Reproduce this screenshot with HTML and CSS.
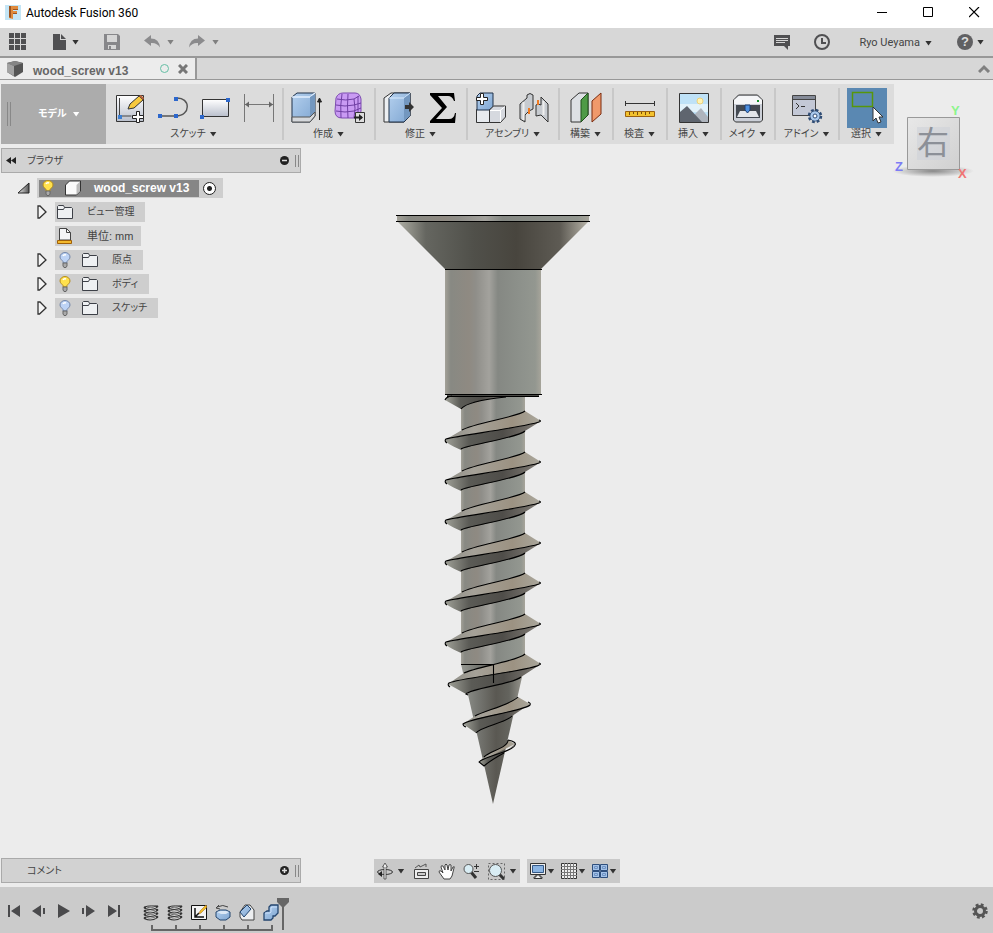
FILE: index.html
```html
<!DOCTYPE html>
<html lang="ja">
<head>
  <meta charset="UTF-8" />
  <meta name="viewport" content="width=device-width, initial-scale=1.0" />
  <title>Autodesk Fusion 360</title>
  <link rel="stylesheet" href="styles.css">
</head>

<body>
  <!-- shared gradients and symbols -->
  <svg class="sprite" width="0" height="0" aria-hidden="true">
    <defs>
      <linearGradient id="blue" x1="0" y1="0" x2="1" y2="1"><stop offset="0" stop-color="#b4d0ee" /><stop offset="1" stop-color="#7fa6d2" /></linearGradient>
      <linearGradient id="paper" x1="0" y1="0" x2="0" y2="1"><stop offset="0" stop-color="#fff" /><stop offset="1" stop-color="#b9bfcc" /></linearGradient>
      <linearGradient id="shank"><stop offset="0" stop-color="#a3a198" /><stop offset=".06" stop-color="#888983" /><stop offset=".25" stop-color="#8f8a82" /><stop offset=".32" stop-color="#8f8e89" /><stop offset=".46" stop-color="#a3a29d" /><stop offset=".55" stop-color="#858883" /><stop offset=".78" stop-color="#8d918b" /><stop offset=".94" stop-color="#939790" /><stop offset="1" stop-color="#a6a49a" /></linearGradient>
      <linearGradient id="head"><stop offset="0" stop-color="#b0b0a6" /><stop offset=".15" stop-color="#656660" /><stop offset=".4" stop-color="#50504a" /><stop offset=".62" stop-color="#48453e" /><stop offset=".85" stop-color="#5e5b54" /><stop offset="1" stop-color="#b8b4a9" /></linearGradient>
      <linearGradient id="cone"><stop offset="0" stop-color="#969892" /><stop offset=".25" stop-color="#777873" /><stop offset=".55" stop-color="#5a5852" /><stop offset=".75" stop-color="#64645e" /><stop offset="1" stop-color="#a09e96" /></linearGradient>
      <linearGradient id="lit"><stop offset="0" stop-color="#8e8e87" /><stop offset=".3" stop-color="#a5a198" /><stop offset=".7" stop-color="#9c9282" /><stop offset="1" stop-color="#aaa79c" /></linearGradient>
      <linearGradient id="dim"><stop offset="0" stop-color="#a0a198" /><stop offset=".25" stop-color="#5b5b56" /><stop offset=".6" stop-color="#4f4d49" /><stop offset="1" stop-color="#858079" /></linearGradient>
      <linearGradient id="corner"><stop offset="0" stop-color="#eee" /><stop offset="1" stop-color="#555" /></linearGradient>
    </defs>
    <symbol id="bulb" viewBox="0 0 12 16">
      <path d="M4 9.500C3 8 1 7 1 5a5 4.500 0 0 1 10 0C11 7 9 8 8 9.500V11H4z" stroke-width="1" />
      <path d="M4 4q1-2 3-1" fill="none" stroke="#fff" stroke-width="1.500" />
      <path d="M4 11h4v3l-1 1.500H5L4 14z" fill="#aaa" stroke="#666" />
    </symbol>
    <symbol id="folder" viewBox="0 0 16 16">
      <path d="M.5 14.500v-12l1-1h5l1 2h7l1 1v10z" fill="#eef0f2" stroke="#3d4047" />
      <path d="M1 5.500h5.500l1-2" fill="none" stroke="#3d4047" />
    </symbol>
    <symbol id="expand" viewBox="0 0 10 14">
      <path d="M1 1v12l1.500 0L9 7 3 1z" fill="#f4f4f4" stroke="#333" stroke-width="1.300" />
    </symbol>
    <symbol id="spring" viewBox="0 0 16 16">
      <path d="M2 3q6 3 12-1M2 6.500q6 3 12-1M2 10q6 3 12-1M2 13.500q6 3 12-1" fill="none" stroke="#333" stroke-width="2.600" stroke-linecap="round" />
      <path d="M3 3q5 2 10-.5M3 6.500q5 2 10-.5M3 10q5 2 10-.5M3 13.500q5 2 10-.5" fill="none" stroke="#d0d0d0" stroke-width="1.200" />
      <path d="M2 3q0-2 11-1.500" fill="none" stroke="#333" />
    </symbol>
    <symbol id="turn" viewBox="440 405 106 50">
      <path d="M525 411L541 421C533 426 455 436 445 440L462 430C474 423 518 417 525 411z" fill="url(#lit)" />
      <path d="M541 421C533 426 455 436 445 440Q445 443 461 450C466 445 518 438 525 431z" fill="url(#dim)" />
      <path d="M525 411C518 417 474 423 462 430M539 420q3 1 0 2C525 427 455 436 446 439q-2 2 1 4M461 449C466 445 518 438 525 431" fill="none" stroke="#000" stroke-width="1.100" />
    </symbol>
  </svg>

  <header class="titlebar">
    <svg class="app-icon" width="16" height="16" viewBox="0 0 16 16"><path d="M0 0h16v15H0z" fill="#c4e5f5" /><path d="M4 1h9v3H8v2h4v3H8v5l-4-1z" fill="#e08a3c" /><path d="M4 1h2v12l-2-1zM8 4h5v1H8zM8 8h4v1H8z" fill="#9c5320" /></svg>
    <h1>Autodesk Fusion 360</h1>
    <div class="window-buttons">
      <button aria-label="最小化"><svg width="11" height="11"><path d="M0 5.500h10" stroke="#000" /></svg></button>
      <button aria-label="最大化"><svg width="11" height="11"><path d="M.5.5h9v9h-9z" fill="none" stroke="#000" /></svg></button>
      <button aria-label="閉じる"><svg width="11" height="11"><path d="M0 0l10 10M10 0L0 10" stroke="#000" stroke-width="1.200" /></svg></button>
    </div>
  </header>

  <nav class="quickbar">
    <button aria-label="データパネル"><svg width="18" height="18" fill="#505052"><path d="M0 0h5v5H0zM6 0h5v5H6zM12 0h5v5h-5zM0 6h5v5H0zM6 6h5v5H6zM12 6h5v5h-5zM0 12h5v5H0zM6 12h5v5H6zM12 12h5v5h-5z" /></svg></button>
    <button class="file" aria-label="ファイル"><svg width="14" height="16" fill="#505052"><path d="M0 0h7v6h6v10H0z" /><path d="M8 0l5 5H8z" /></svg><i class="caret"></i></button>
    <button class="save" aria-label="保存"><svg width="17" height="16"><path d="M0 0h14l2 2v14H0z" fill="#87878a" /><path d="M3 1h10v7H3zM4 11h8v4H4z" fill="#d6d6d6" /><path d="M5 12h2v3H5z" fill="#87878a" /></svg></button>
    <button class="undo muted" aria-label="元に戻す"><svg width="17" height="14"><path d="M0 5.500L7 0v3.500q8 0 9 9-3-5-9-4.500v3z" fill="#8b8b8d" /></svg><i class="caret"></i></button>
    <button class="redo muted" aria-label="やり直し"><svg width="17" height="14"><path d="M16 5.500L9 0v3.500q-8 0-9 9 3-5 9-4.500v3z" fill="#8b8b8d" /></svg><i class="caret"></i></button>
    <div class="account">
      <button aria-label="コメント"><svg width="17" height="16"><path d="M0 1h16v11h-2v4l-4-4H0z" fill="#505052" /><path d="M2 4.500h12M2 6.500h12M2 8.500h9" stroke="#d6d6d6" /></svg></button>
      <button class="clock" aria-label="ジョブの状態"><svg width="17" height="17"><circle cx="8" cy="8" r="7" fill="none" stroke="#505052" stroke-width="2" /><path d="M8 4v5h4" fill="none" stroke="#505052" stroke-width="2" /></svg></button>
      <button class="user">Ryo Ueyama<i class="caret"></i></button>
      <button class="help" aria-label="ヘルプ"><b>?</b><i class="caret"></i></button>
    </div>
  </nav>

  <div class="tabs">
    <div class="tab">
      <svg width="17" height="16"><path d="M0 2l8-2 8 2v9l-8 5-8-5z" fill="#555" /><path d="M0 2l8-2 8 2-9 3z" fill="#858585" /><path d="M0 2l7 3v10L0 11z" fill="#a2a2a2" /></svg>
      <span>wood_screw v13</span>
      <i class="status"></i>
      <button aria-label="タブを閉じる"><svg width="10" height="10"><path d="M1 1l8 8M9 1L1 9" stroke="#777" stroke-width="3" /></svg></button>
    </div>
    <button class="collapse" aria-label="折りたたむ"><svg width="13" height="9"><path d="M1 8l5-5 5 5" fill="none" stroke="#808080" stroke-width="3" /></svg></button>
  </div>

  <div class="workspace">
    <div class="ribbon">
      <button class="mode"><i class="grip"></i><span>モデル</span><i class="caret"></i></button>

      <section class="group sketch">
        <div class="icons">
          <svg viewBox="0 0 32 32"><path d="M3.500 3.500h27v26h-27z" fill="url(#paper)" stroke="#333" /><path d="M6.500 6v18h12" fill="none" stroke="#444" /><path d="M5 23h4v4H5z" fill="#3d7ed0" /><path d="M15 17l2-5 9-8 4 4-9 8z" fill="#f7c93e" stroke="#333" /><path d="M26 4l2-1 3 3-1 2z" fill="#b7653e" /><path d="M23.500 19.500h3v4h4v3h-4v4h-3v-4h-4v-3h4z" fill="#fff" stroke="#222" /></svg>
          <svg viewBox="0 0 32 32"><path d="M4 24h16M20 6c15-1 15 18 0 18" fill="none" stroke="#555" stroke-width="1.400" /><path d="M2 22h4v4H2zM18 22h4v4h-4zM18 5h4v4h-4z" fill="#2c67cc" /></svg>
          <svg viewBox="0 0 32 32"><path d="M3.500 7.500h26v17h-26z" fill="url(#paper)" stroke="#333" /><path d="M1 23h4v4H1zM27 6h4v4h-4z" fill="#2c67cc" /></svg>
          <svg viewBox="0 0 32 32"><path d="M2.500 2v28M31.500 2v28M3 12.500h28" fill="none" stroke="#777" /><path d="M3 12.500l4-3v6zM31 12.500l-4-3v6z" fill="#666" /></svg>
        </div>
        <button>スケッチ<i class="caret"></i></button>
      </section>

      <section class="group pair">
        <div class="icons">
          <svg viewBox="0 0 32 32"><path d="M1 5l5-4h18v23l-5 6H1z" fill="url(#blue)" stroke="#1f3048" /><path d="M1 5h18l5-4" fill="none" stroke="#e2efff" stroke-width="1.500" /><path d="M19 5v24l5-5V2z" fill="#7397bf" /><path d="M1 25h18l5-5v4l-5 6H1z" fill="#d5d8dc" stroke="#555" /><path d="M28.500 28V7m-2 3l2-4 2 4z" stroke="#222" fill="#222" /></svg>
          <svg viewBox="0 0 32 32"><path d="M2 6q2-5 7-5h12q5 0 6 6v12q-1 7-7 7H8q-7 0-7-7z" fill="#c99af3" stroke="#7d4db0" /><path d="M3 7q9 2 17 0l5-3M20 7q2 9 0 19M2 13q9 2 18 0l7-2M2 19q9 2 18 0l7-3M8 2Q6 13 7 26M14 2q-1 12 0 24M24 4v20" stroke="#6f3fa3" fill="none" /><path d="M21.500 20.500h9v10h-9z" fill="#ddd" stroke="#333" /><path d="M20 25.500h8" stroke="#222" stroke-width="2" /><path d="M25 22l4 3.500-4 3.500z" fill="#222" /></svg>
        </div>
        <button>作成<i class="caret"></i></button>
      </section>

      <section class="group pair">
        <div class="icons">
          <svg viewBox="0 0 32 32"><path d="M1 6l7-5h19v23l-6 6H1z" fill="#eceff2" stroke="#333" /><path d="M6 6l5-5h16v23l-6 6H6z" fill="url(#blue)" stroke="#1f3048" /><path d="M6 6h15l6-5" fill="none" stroke="#d9ebff" /><path d="M21 6v23l6-5V2z" fill="#7397bf" /><path d="M22 13h4V10l5 5-5 5v-3h-4z" fill="#333" /></svg>
          <svg viewBox="0 0 32 32"><path d="M4 1h24l1 8h-1q-2-5-6-5H12l9 11-11 12h13q5 0 6-6h1l-1 10H4v-2l12-13L4 3z" fill="#000" /></svg>
        </div>
        <button>修正<i class="caret"></i></button>
      </section>

      <section class="group pair">
        <div class="icons">
          <svg viewBox="0 0 32 32"><path d="M1.500 17.500h13v13h-13z" fill="#e7eaee" stroke="#333" /><path d="M2 4l3-3h13v14l-4 3H2z" fill="url(#blue)" stroke="#1f3048" /><path d="M14.500 18l4-4h12v11l-5 5.500h-11z" fill="#d6d9df" stroke="#333" /><path d="M15 18.500h10l5-4M25.500 18v12" fill="none" stroke="#fff" /><path d="M5.500 1.500h3v4h4v3h-4v4h-3v-4h-4v-3h4z" fill="#fff" stroke="#222" /></svg>
          <svg viewBox="0 0 32 32"><path d="M2 12l7-6V3q3-3 6 0v14l-4 2-4 4v7l-5-3z" fill="#c7cbd0" stroke="#333" /><path d="M5.500 10v18" stroke="#eee" stroke-width="2" /><path d="M18 13q2-2 5 0V5l7 7v18l-7-7-5 1z" fill="#c7cbd0" stroke="#333" /><path d="M25.500 9v14" stroke="#eee" stroke-width="2" /><path d="M11 16v6M20 8v5" stroke="#ef7a22" stroke-width="2" /></svg>
        </div>
        <button>アセンブリ<i class="caret"></i></button>
      </section>

      <section class="group">
        <div class="icons">
          <svg viewBox="0 0 32 32"><path d="M1 8l8-7h9v22l-7 7H1z" fill="#dde0e4" stroke="#333" /><path d="M11 8l7-7v22l-7 7z" fill="#4e9a46" stroke="#1f4e1b" /><path d="M22 9l9-8v21l-9 8z" fill="#f0996b" stroke="#7a2b0e" /></svg>
        </div>
        <button>構築<i class="caret"></i></button>
      </section>

      <section class="group">
        <div class="icons">
          <svg viewBox="0 0 32 32"><path d="M1.500 9v5M30.500 9v5M2 11.500h28" stroke="#333" fill="none" /><path d="M1.500 19.500h29v5h-29z" fill="#f3c22e" stroke="#9a6110" /><path d="M5.500 20v3M9.500 20v2M13.500 20v3M17.500 20v2M21.500 20v3M25.500 20v2" stroke="#7a4d0c" /></svg>
        </div>
        <button>検査<i class="caret"></i></button>
      </section>

      <section class="group">
        <div class="icons">
          <svg viewBox="0 0 32 32"><path d="M1.500 1.500h29v29h-29z" fill="#bfe2f7" stroke="#333" /><path d="M2 20h28v-8H2z" fill="#e2f2fa" /><circle cx="22" cy="9" r="3" fill="#fff4b5" stroke="#efd27a" /><path d="M17 22l6-6 7 9v5H17z" fill="#aeb4bd" /><path d="M2 20l7-6 15 16H2z" fill="#5f656f" /></svg>
        </div>
        <button>挿入<i class="caret"></i></button>
      </section>

      <section class="group">
        <div class="icons">
          <svg viewBox="0 0 32 32"><path d="M1.500 8l5-5h19l5 5v20l-2 2h-25l-2-2z" fill="#ccd0d8" stroke="#333" /><path d="M2 8l5-4h18l5 4v4H2z" fill="#f5f6f8" /><path d="M4 13h24v13H4z" fill="#444a52" /><path d="M8 19h16l3 6H5z" fill="#e3e6ea" /><path d="M13 13h5v5l-2.500 3-2.500-3z" fill="#4c8fe0" stroke="#1d3f73" /><path d="M25 8h2v2h-2z" fill="#17902c" /></svg>
        </div>
        <button>メイク<i class="caret"></i></button>
      </section>

      <section class="group addin">
        <div class="icons">
          <svg viewBox="0 0 32 32"><path d="M1.500 3.500h23v20h-23z" fill="#c3c8d6" stroke="#444" /><path d="M2 4h22v3H2z" fill="#858b98" /><path d="M2 7.500h22" stroke="#444" /><path d="M5 11l3 3-3 3M10 14.500h4" stroke="#333" fill="none" /><circle cx="24" cy="24" r="5" fill="#a9c8ec" stroke="#2f4c74" /><circle cx="24" cy="24" r="6" fill="none" stroke="#2f4c74" stroke-width="2.500" stroke-dasharray="2.700 2.012" /><circle cx="24" cy="24" r="4.500" fill="#a9c8ec" /><circle cx="24" cy="24" r="2" fill="#fff" stroke="#2f4c74" /></svg>
        </div>
        <button>アドイン<i class="caret"></i></button>
      </section>

      <section class="group select">
        <div class="icons">
          <svg viewBox="0 0 40 40"><path d="M0 0h40v40H0z" fill="#5a88b2" /><path d="M5.500 4.500h20v14h-20z" fill="none" stroke="#57960a" stroke-width="1.500" /><path d="M26 19v14l3-3 2 5 3-1-2-5h4z" fill="#fff" stroke="#333" /></svg>
        </div>
        <button>選択<i class="caret"></i></button>
      </section>
    </div>

    <svg class="viewcube" width="86" height="84" viewBox="890 100 86 84">
      <defs>
        <linearGradient id="face" x1="0" y1="0" x2="1" y2="1"><stop offset="0" stop-color="#e8e8e8" /><stop offset="1" stop-color="#d0d0d0" /></linearGradient>
        <radialGradient id="shade"><stop offset="0" stop-color="#888" /><stop offset="1" stop-color="#888" stop-opacity="0" /></radialGradient>
      </defs>
      <ellipse cx="933" cy="171" rx="41" ry="6" fill="url(#shade)" />
      <path d="M907.500 117.500h52v52h-52z" fill="url(#face)" stroke="#999" />
      <path d="M917 127h33v33h-33z" fill="#ced2d8" opacity=".6" />
      <text class="cube-face" x="933" y="154" text-anchor="middle">右</text>
      <text class="axis" x="951" y="115" fill="#8cf58c">Y</text>
      <text class="axis" x="895" y="171" fill="#7c7cf5">Z</text>
      <text class="axis" x="958" y="178" fill="#f07474">X</text>
    </svg>

    <main class="stage">
      <svg class="screw" width="206" height="600" viewBox="390 210 206 600" role="img" aria-label="wood_screw v13">
        <path d="M397 215h192v6H397z" fill="url(#shank)" />
        <path d="M397 221h192l-48 48h-96z" fill="url(#head)" />
        <path d="M445 269h96v126h-96z" fill="url(#shank)" />
        <path d="M461 396h64v268h-64z" fill="url(#shank)" />
        <path d="M461 664h64l-32 140z" fill="url(#cone)" />
        <path d="M446 397h60Q467 401 461 409L445 400z" fill="url(#dim)" />
        <path d="M447 395h92v2h-92z" fill="#4a4a46" />
        <path d="M396 215.500h194M396 221.500h194M445 269.500h97M445 394.500h97M447 396.500h92" stroke="#000" fill="none" />
        <path d="M452 396q-6 1-7 4M506 397Q467 401 461 409" stroke="#000" fill="none" stroke-width="1.100" />
        <use href="#turn" x="440" y="405" width="106" height="50" />
        <use href="#turn" x="440" y="446" width="106" height="50" />
        <use href="#turn" x="440" y="486" width="106" height="50" />
        <use href="#turn" x="440" y="527" width="106" height="50" />
        <use href="#turn" x="440" y="567" width="106" height="50" />
        <use href="#turn" x="440" y="608" width="106" height="50" />
        <!-- tapered turns near the point -->
        <path d="M525 654L541 664C533 670 458 678 448 684L464 673C476 667 518 661 525 654z" fill="url(#lit)" />
        <path d="M541 664C533 670 458 678 448 684L466 694C471 688 514 684 521 677z" fill="url(#dim)" />
        <path d="M518 697L530 704C524 711 470 718 463 724L475 716C484 711 512 704 518 697z" fill="url(#lit)" />
        <path d="M530 704C524 711 470 718 463 724L476 733C482 726 506 723 512 716z" fill="url(#dim)" />
        <path d="M508 740L515 744 479 762 484 757C490 751 508 748 508 740z" fill="url(#lit)" />
        <path d="M515 744C514 751 483 757 479 762L484 766Q491 760 504 753z" fill="url(#dim)" />
        <path d="M525 654C518 661 476 667 464 673M539 663q3 1 0 2C530 671 458 678 449 683q-2 2 1 4M468 695l-2-1C471 688 514 684 521 677M518 697C512 704 484 711 475 716M528 702q3 1 2 3C524 711 470 718 463 724q0 2 3 3M476 733C482 726 506 723 512 716M508 740C508 748 490 751 484 757M508 740q9 2 7 5C514 751 483 757 479 762l5 4Q491 760 504 753M461 664.500h32.500V683" fill="none" stroke="#000" stroke-width="1.100" />
      </svg>

      <aside class="browser">
        <div class="panel">
          <button aria-label="ブラウザを隠す"><svg width="11" height="7" fill="#222"><path d="M5 0v7L0 3.500zM10 0v7L5 3.500z" /></svg></button>
          <h2>ブラウザ</h2>
          <button aria-label="縮小"><svg width="9" height="9"><circle cx="4.500" cy="4.500" r="4.500" fill="#222" /><path d="M2 4.500h5" stroke="#ddd" stroke-width="1.500" /></svg></button>
          <i class="grip"></i>
        </div>
        <ul class="tree">
          <li class="root">
            <button aria-label="閉じる"><svg width="13" height="12"><path d="M12 1v10H1z" fill="url(#corner)" stroke="#222" /></svg></button>
            <label class="node">
              <span class="active"><svg class="on" width="12" height="16"><use href="#bulb" /></svg><svg width="18" height="16"><path d="M1.500 5l4-4h11v10l-4 4h-11z" fill="#fafafa" stroke="#333" /><path d="M12.500 5v9.500L16 11V1.500z" fill="#bbb" /></svg><span>wood_screw v13</span></span>
              <input type="radio" name="component" checked>
            </label>
          </li>
          <li><button aria-label="開く"><svg width="10" height="14"><use href="#expand" /></svg></button><span class="node"><svg width="16" height="16"><use href="#folder" /></svg><span>ビュー管理</span></span></li>
          <li><span class="node unit"><svg width="16" height="16"><path d="M2.500 12V.5h7l4 4V12z" fill="#f4f5f7" stroke="#444" /><path d="M9.500.5v4h4" fill="none" stroke="#444" /><path d="M.5 12.500h14v3H.5z" fill="#f3b92e" stroke="#a06008" /></svg><span>単位: mm</span></span></li>
          <li><button aria-label="開く"><svg width="10" height="14"><use href="#expand" /></svg></button><span class="node with-bulb"><svg class="off" width="12" height="16"><use href="#bulb" /></svg><svg width="16" height="16"><use href="#folder" /></svg><span>原点</span></span></li>
          <li><button aria-label="開く"><svg width="10" height="14"><use href="#expand" /></svg></button><span class="node with-bulb"><svg class="on" width="12" height="16"><use href="#bulb" /></svg><svg width="16" height="16"><use href="#folder" /></svg><span>ボディ</span></span></li>
          <li><button aria-label="開く"><svg width="10" height="14"><use href="#expand" /></svg></button><span class="node with-bulb"><svg class="off" width="12" height="16"><use href="#bulb" /></svg><svg width="16" height="16"><use href="#folder" /></svg><span>スケッチ</span></span></li>
        </ul>
      </aside>

      <div class="panel comments">
        <h2>コメント</h2>
        <button aria-label="コメントを追加"><svg width="9" height="9"><circle cx="4.500" cy="4.500" r="4.500" fill="#222" /><path d="M2 4.500h5M4.500 2v5" stroke="#ddd" stroke-width="1.500" /></svg></button>
        <i class="grip"></i>
      </div>

      <div class="navbar">
        <div class="nav-group camera">
          <button aria-label="オービット"><svg width="16" height="18"><ellipse cx="8" cy="10" rx="7.500" ry="2.500" fill="none" stroke="#333" /><path d="M8 1l2.500 4H9v12H7V5H5.500z" fill="#eee" stroke="#444" stroke-width=".8" /><path d="M5 9v6l-4-3z" fill="#222" /></svg><i class="caret"></i></button>
          <button aria-label="ビュー正面"><svg width="17" height="16"><path d="M1.500 6.500h14v9h-14z" fill="#eee" stroke="#444" /><path d="M4.500 9.500h8v3h-8z" fill="#ccc" stroke="#444" /><path d="M2 5l4-3 1 2 6-3v3" fill="none" stroke="#555" /></svg></button>
          <button aria-label="画面移動"><svg width="17" height="17"><path d="M6 16L1 9q0-2 2-1l2 2-2-6q0-2 2-1l2 4V2q1-2 2 0l1 5 1-5q1-1 2 0v6l2-4q2-1 1 1l-2 8-2 3z" fill="#fff" stroke="#444" /></svg></button>
          <button aria-label="ズーム"><svg width="17" height="17"><path d="M8 9l5 6" stroke="#333" stroke-width="3" /><circle cx="5.500" cy="6" r="4.500" fill="#d9edf4" stroke="#555" /><path d="M11 3.500h5M13.500 1v5M11 8.500h5" stroke="#333" /></svg></button>
          <button aria-label="フィット"><svg width="17" height="17"><path d="M.5.5h16v16H.5z" fill="none" stroke="#666" stroke-dasharray="2 2" /><path d="M11 11l5 5" stroke="#333" stroke-width="3" /><circle cx="7.500" cy="7.500" r="6" fill="#d9edf4" stroke="#555" /></svg><i class="caret"></i></button>
        </div>
        <div class="nav-group">
          <button aria-label="表示設定"><svg width="16" height="16"><path d="M.5.5h15v11H.5z" fill="#eee" stroke="#333" /><path d="M2.500 2.500h11v7h-11z" fill="#8ab4e3" stroke="#345987" /><path d="M6 12h4v2h2v1.500H4V14h2z" fill="#eee" stroke="#333" /></svg><i class="caret"></i></button>
          <button aria-label="グリッド"><svg width="16" height="16"><path d="M.5.5h15v15H.5z" fill="#eee" stroke="#333" /><path d="M3.500 0v16M6.500 0v16M9.500 0v16M12.500 0v16M0 3.500h16M0 6.500h16M0 9.500h16M0 12.500h16" stroke="#777" /></svg><i class="caret"></i></button>
          <button aria-label="ビューポート"><svg width="16" height="16"><path d="M.5 1.500h7v6h-7zM8.500 1.500h7v6h-7zM.5 8.500h7v6h-7zM8.500 8.500h7v6h-7z" fill="#a5c3e8" stroke="#2f4f7d" /><path d="M2.500 3.500h3v2h-3zM10.500 3.500h3v2h-3zM2.500 10.500h3v2h-3zM10.500 10.500h3v2h-3z" fill="none" stroke="#6f93c4" /></svg><i class="caret"></i></button>
        </div>
      </div>
    </main>
  </div>

  <footer class="timeline">
    <div class="playback">
      <button aria-label="先頭へ"><svg width="14" height="14"><path d="M1 1h2v12H1zM13 1v12L4 7z" /></svg></button>
      <button aria-label="前へ"><svg width="14" height="14"><path d="M9 1v12L0 7zM11 4h2v6h-2z" /></svg></button>
      <button aria-label="再生"><svg width="14" height="14"><path d="M1 0v14l12-7z" /></svg></button>
      <button aria-label="次へ"><svg width="14" height="14"><path d="M4 1v12l9-6zM0 4h2v6H0z" /></svg></button>
      <button aria-label="末尾へ"><svg width="14" height="14"><path d="M11 1h2v12h-2zM1 1v12l9-6z" /></svg></button>
    </div>
    <div class="history">
      <div class="features">
        <svg width="16" height="17"><use href="#spring" /></svg>
        <svg width="16" height="17"><use href="#spring" /></svg>
        <svg width="16" height="17"><path d="M.5 1.500h15v14H.5z" fill="#f4f4f4" stroke="#111" /><path d="M4 4v9h9M4 13l4-4" fill="none" stroke="#111" stroke-width="1.500" /><path d="M8 10l1-3 6-6 1 2-6 6z" fill="#f4bf25" stroke="#9c631d" stroke-width=".5" /></svg>
        <svg width="16" height="17"><path d="M2 3q6-3 11 0M4 1L1 4l4 1" fill="none" stroke="#444" /><path d="M1 8l4-2h6l4 2v5l-4 3H5l-4-3z" fill="url(#blue)" stroke="#24466f" /><path d="M2 8l4-1h5l3 1-3 2H6z" fill="#dbe8f6" /></svg>
        <svg width="16" height="17"><path d="M6 1h5l4 5v10H3l-2-3V8z" fill="#eceef0" stroke="#444" /><path d="M1 8l7-7 4 4-7 8z" fill="url(#blue)" stroke="#24466f" /></svg>
        <svg width="16" height="17"><path d="M6 3l2-2h7v8l-3 3h-2v2l-2 2H1V9l3-2h2z" fill="url(#blue)" stroke="#24466f" stroke-width="1.300" /><path d="M2 9h5l1-1V4l1-1h5" fill="none" stroke="#c9defa" /></svg>
      </div>
      <svg class="track" width="122" height="6"><path d="M1 0v5h120V0M25 0v5M49 0v5M73 0v5M97 0v5" fill="none" stroke="#666" stroke-width="2" /></svg>
    </div>
    <svg class="marker" width="13" height="33"><path d="M0 0h12v4l-5 5v23H5V9L0 4z" fill="#666" /></svg>
    <button class="settings" aria-label="設定"><svg width="16" height="16"><circle cx="8" cy="8" r="4.500" fill="none" stroke="#555" stroke-width="3" /><circle cx="8" cy="8" r="6.500" fill="none" stroke="#555" stroke-width="2.500" stroke-dasharray="2.800 2.305" /></svg></button>
  </footer>
</body>
</html>
```
FILE: styles.css
```css
:root {
  --canvas: #ececec;
  --bar: #d7d7d7;
  --panel: #d2d2d2;
  --line: #989898;
  --text: #444;
}

* {
  box-sizing: border-box;
}

body {
  display: flex;
  flex-direction: column;
  min-height: 100vh;
  margin: 0;
  font-family: "Liberation Sans", "Noto Sans CJK JP", sans-serif;
  font-size: 10px;
  line-height: 16px;
  font-feature-settings: "palt";
  color: var(--text);
  background: var(--canvas);
}

svg {
  display: block;
  flex: none;
}

.sprite {
  position: absolute;
}

button {
  display: flex;
  align-items: center;
  justify-content: center;
  padding: 0;
  border: none;
  background: none;
  color: inherit;
  font: inherit;
  font-feature-settings: inherit;
  white-space: nowrap;
  cursor: pointer;
}

h1, h2 {
  margin: 0;
  font-size: inherit;
  font-weight: normal;
}

.caret {
  width: 7px;
  height: 5px;
  background: #333;
  clip-path: polygon(0 0, 100% 0, 50% 100%);
}

.muted .caret {
  background: #808080;
}

.grip {
  width: 4px;
  height: 12px;
  border: 1px solid #888;
  border-width: 0 1px;
}

/* title bar */
.titlebar {
  display: flex;
  align-items: center;
  height: 28px;
  padding: 0 0 3px 5px;
  background: #fff;
  color: #000;
}

.titlebar h1 {
  margin-left: 5px;
  font: 12px Roboto, sans-serif;
}

.window-buttons {
  display: flex;
  gap: 8px;
  margin-left: auto;
}

.window-buttons button {
  width: 38px;
  height: 24px;
}

/* quick access */
.quickbar {
  display: flex;
  align-items: center;
  height: 30px;
  padding: 0 9px;
  background: var(--bar);
  border-bottom: 2px solid var(--line);
}

.file {
  gap: 5px;
  margin-left: 26px;
}

.save {
  margin-left: 25px;
}

.undo {
  gap: 6px;
  margin-left: 23px;
}

.redo {
  gap: 6px;
  margin-left: 15px;
}

.account {
  display: flex;
  align-items: center;
  margin-left: auto;
}

.clock {
  margin-left: 23px;
}

.user {
  gap: 5px;
  height: 20px;
  margin-left: 28px;
  padding-top: 2px;
  font-family: Roboto, sans-serif;
  font-size: 11px;
}

.help {
  gap: 4px;
  margin-left: 25px;
}

.help b {
  width: 16px;
  height: 16px;
  border-radius: 50%;
  background: #606062;
  color: #ddd;
  font-size: 13px;
}

/* document tabs */
.tabs {
  display: flex;
  height: 22px;
  background: var(--bar);
  border-bottom: 1px solid var(--line);
}

.tab {
  display: flex;
  align-items: center;
  width: 197px;
  padding-left: 7px;
  background: var(--canvas);
  border-right: 2px solid var(--line);
  color: #666;
  font-size: 12px;
  font-weight: bold;
}

.tab span {
  margin: 4px auto 0 9px;
}

.status {
  width: 9px;
  height: 9px;
  border: 1px solid #65bfa5;
  border-radius: 50%;
}

.tab button {
  margin: 0 7px 0 9px;
}

.collapse {
  margin: 0 2px 0 auto;
}

/* ribbon */
.workspace {
  position: relative;
  display: flex;
  flex: 1;
  flex-direction: column;
}

.ribbon {
  display: flex;
  align-self: flex-start;
  height: 60px;
  margin: 4px 0 0 1px;
  background: #dcdcdc;
}

.mode {
  justify-content: flex-start;
  width: 105px;
  padding-left: 6px;
  background: #acacac;
  color: #fff;
  font-weight: bold;
}

.mode .grip {
  height: 24px;
}

.mode span {
  margin: 0 6px 0 27px;
}

.mode .caret {
  background: #fff;
}

.group {
  display: flex;
  flex-direction: column;
  align-items: center;
  justify-content: space-between;
  width: 54px;
  margin: 4px 0;
  padding-right: 1px;
  border-right: 2px solid #c8c8c8;
}

.group.sketch {
  width: 178px;
}

.group.pair {
  width: 92px;
}

.group.addin {
  width: 64px;
}

.group.select {
  width: 54px;
  border-right: none;
}

.icons {
  display: flex;
  align-items: center;
  gap: 11px;
  height: 40px;
}

.icons svg {
  width: 32px;
}

.select .icons svg {
  width: 40px;
}

.group button {
  gap: 4px;
  height: 12px;
}

/* canvas */
.stage {
  display: grid;
  flex: 1;
  grid-template-columns: 300px 1fr;
  grid-template-rows: 1fr auto;
  padding: 4px 0;
}

.screw {
  grid-area: 1 / 1 / 3 / 3;
  justify-self: center;
  margin: 62px 7px 0 0;
}

.viewcube {
  position: absolute;
  top: 20px;
  right: 17px;
}

.cube-face {
  fill: #8c9098;
  font-size: 32px;
}

.axis {
  font-size: 13px;
  font-weight: bold;
}

.browser {
  grid-area: 1 / 1;
}

.panel {
  display: flex;
  align-items: center;
  width: 300px;
  height: 25px;
  margin-left: 1px;
  padding: 0 1px 0 4px;
  background: var(--panel);
  border: 1px solid #aaa;
}

.panel h2 {
  margin: 0 auto 0 10px;
}

.panel .grip {
  margin-left: 6px;
}

.comments {
  grid-area: 2 / 1;
}

.comments h2 {
  margin-left: 21px;
}

.tree {
  margin: 5px 0 0;
  padding: 0 0 0 37px;
  list-style: none;
}

.tree li {
  display: flex;
  align-items: center;
  height: 20px;
  margin-bottom: 4px;
}

.tree li > button {
  width: 10px;
  margin-right: 8px;
}

.tree .root {
  margin-left: -20px;
}

.tree .root > button {
  width: 13px;
  margin-right: 7px;
}

.node {
  display: flex;
  align-items: center;
  height: 20px;
  padding: 0 11px 0 2px;
  background: #cecece;
}

.node > span {
  margin-left: 14px;
}

.unit {
  margin-left: 18px;
  padding-right: 8px;
  font-size: 11px;
}

.with-bulb {
  padding-left: 4px;
}

.with-bulb svg + svg {
  margin-left: 11px;
}

.root .node {
  padding: 0 7px 0 2px;
}

.active {
  display: flex;
  align-items: center;
  height: 17px;
  padding: 0 10px 0 3px;
  background: #868686;
  color: #fff;
  font-size: 12px;
  font-weight: bold;
}

.root .active {
  margin-left: 0;
}

.active svg + svg {
  margin: 0 12px 0 10px;
}

.on {
  fill: #ffe14d;
  stroke: #b58c1c;
}

.off {
  fill: #bdd3f5;
  stroke: #7386a8;
}

.node input {
  width: 13px;
  height: 13px;
  margin: 0 0 0 4px;
  border: 1px solid #222;
  border-radius: 50%;
  appearance: none;
  background: radial-gradient(circle, #222 0 2px, #fff 3px);
}

/* navigation bar */
.navbar {
  display: flex;
  grid-area: 2 / 1 / 3 / 3;
  gap: 7px;
  justify-self: center;
}

.nav-group {
  display: flex;
  gap: 6px;
  height: 24px;
  margin-top: 1px;
  padding: 0 3px;
  background: #c9c9c9;
}

.nav-group.camera {
  gap: 8px;
}

.nav-group button {
  gap: 2px;
}

.camera button {
  gap: 5px;
}

/* timeline */
.timeline {
  display: flex;
  height: 46px;
  padding: 0 5px 0 1px;
  background: #cbcbcb;
}

.playback {
  display: flex;
  margin-right: 17px;
  fill: #4a4a4c;
}

.playback button {
  width: 25px;
  height: 48px;
}

.history {
  display: flex;
  flex-direction: column;
  gap: 4px;
  padding-top: 17px;
}

.features {
  display: flex;
  gap: 8px;
}

.track {
  margin-left: 8px;
}

.marker {
  margin: 11px 0 0 -2px;
}

.settings {
  height: 48px;
  margin-left: auto;
}
```
